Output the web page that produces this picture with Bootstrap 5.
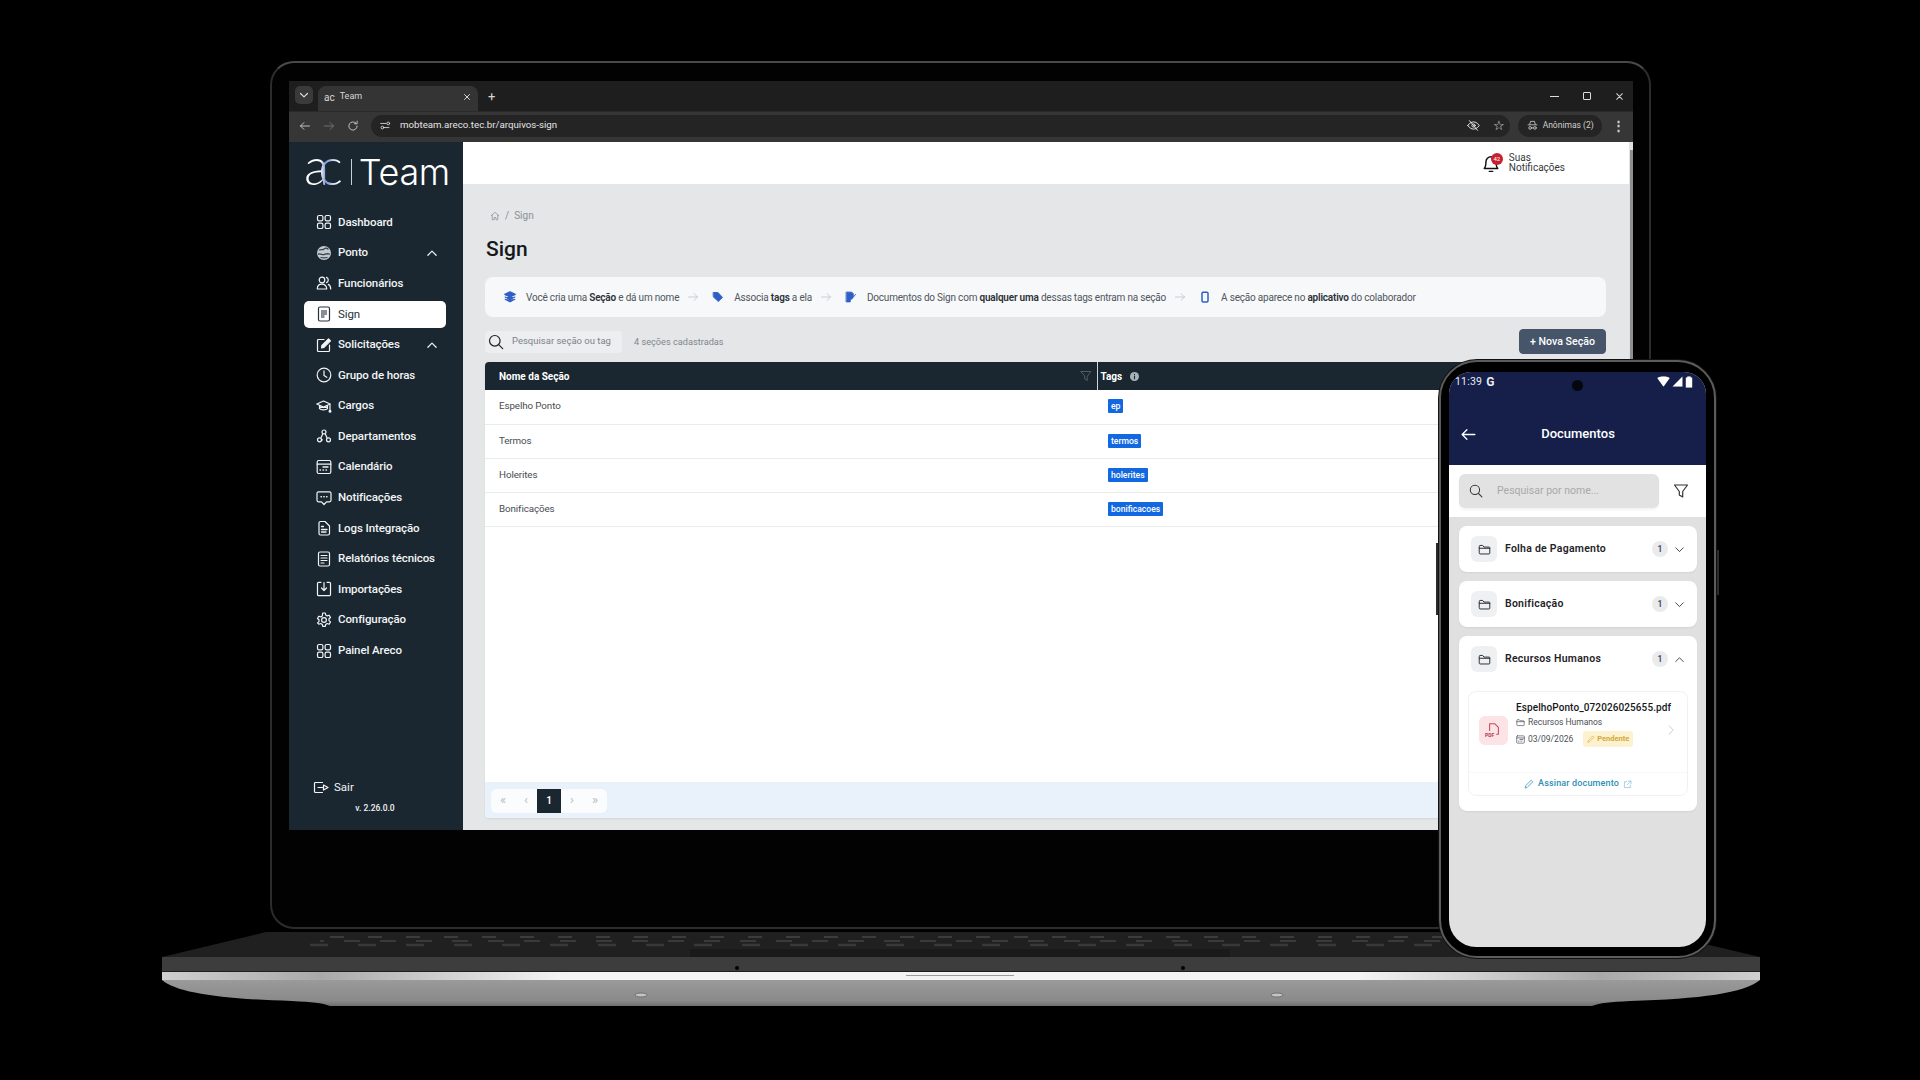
<!DOCTYPE html>
<html lang="pt-BR">
<head>
  <meta charset="UTF-8" />
  <title>Team - Sign</title>
  <link href="https://cdn.jsdelivr.net/npm/bootstrap@5.3.3/dist/css/bootstrap.min.css" rel="stylesheet" />
  <style>
    html, body { background: #000; margin: 0; }
    body { font-family: Roboto, "Liberation Sans", sans-serif; overflow: hidden; }
    .stage { position: relative; width: 1920px; height: 1080px; background: #000; overflow: hidden; }
    .ico { width: 16px; height: 16px; fill: none; stroke: currentColor; stroke-width: 1.2; stroke-linecap: round; stroke-linejoin: round; flex: none; }

    /* laptop */
    .lid { position: absolute; left: 270px; top: 61px; width: 1381px; height: 868px; border: 2px solid #2c2c2c; border-top-color: #4a4a4a; border-radius: 24px; background: #020202; padding: 18px 16px 0 17px; }
    .base { position: absolute; left: 0; top: 0; }
    .browser { width: 1344px; height: 749px; display: flex; flex-direction: column; }
    .tabstrip { height: 30px; background: #1e1e1e; padding: 5px 0 0 6px; color: #d6d6d6; }
    .tab-menu { width: 18px; height: 18px; border-radius: 5px; background: #3a3a3a; margin-right: 5px; }
    .chrome-tab { width: 160px; height: 25px; background: #343434; border-radius: 8px 8px 0 0; padding: 0 7px 3px 6px; font-size: 9px; gap: 5px; }
    .win-ctl { margin-left: auto; gap: 24px; padding: 0 9px 5px 0; }
    .toolbar { height: 31px; background: #363636; color: #cfcfcf; padding: 0 8px 3px 10px; gap: 12px; border-top: 1px solid #2a2a2a; }
    .address { width: 1144px; height: 22px; margin-left: 0; border-radius: 11px; background: #242424; font-size: 9.7px; padding: 0 5px 0 9px; gap: 9px; color: #e4e4e4; }
    .profile { width: 84px; height: 22px; border-radius: 11px; background: #242424; font-size: 8.5px; gap: 5px; margin-left: -4px; }
    .app { flex: 1; display: flex; min-height: 0; background: #e4e6e8; }
    .sidebar { width: 174px; background: #1a2730; color: #f2f4f5; padding: 0 17px 15px 15px; flex: none; }
    .logo { height: 65px; padding: 0 0 6px; color: #fff; line-height: 1; white-space: nowrap; }
    .logo-ac { font-family: Lato, "Open Sans", sans-serif; font-weight: 300; font-size: 52px; line-height: 52px; height: 52px; margin-top: -13px; letter-spacing: -11px; padding-right: 11px; background: linear-gradient(90deg, #fff 42%, #7f98d0 55%, #8ea5da 62%, #fff 88%); -webkit-background-clip: text; background-clip: text; color: transparent; }
    .logo-bar { width: 1px; height: 26px; background: #c9d0d5; margin: 0 7px 0 8px; }
    .logo-team { font-family: Inter, sans-serif; font-weight: 300; font-size: 36px; letter-spacing: -.3px; }
    .side-nav .nav-link { height: 30.6px; color: #f2f4f5; padding: 0 8px 0 12px; font-size: 11.5px; font-weight: 500; gap: 6px; letter-spacing: -.1px; }
    .side-nav .nav-link.active { height: 27px; margin: 2px 0 1.6px; background: #fff; color: #27323a; border-radius: 5px; font-weight: 400; }
    .side-chev { margin-left: auto; width: 12px; height: 12px; stroke-width: 1.6; }
    .side-foot { margin-top: auto; font-size: 11.5px; }
    .side-ver { font-size: 8.5px; font-weight: 500; text-align: center; margin-top: 6px; }

    .main { flex: 1; min-width: 0; display: flex; flex-direction: column; }
    .topbar { height: 42px; background: #fff; padding-right: 64px; font-size: 10px; line-height: 10px; color: #33383c; gap: 9px; }
    .bell-wrap { position: relative; width: 18px; height: 21px; color: #111; }
    .bell-dot { position: absolute; right: -3px; top: 0; width: 12px; height: 12px; line-height: 12px; border-radius: 50%; background: #c8202e; color: #fff; font-size: 6px; text-align: center; }
    .content { flex: 1; display: flex; flex-direction: column; padding: 24px 23px 12px 22px; min-height: 0; }
    .crumbs { font-size: 10px; margin: 0 0 0 5px; --bs-breadcrumb-margin-bottom: 0; --bs-breadcrumb-divider-color: #8a9096; --bs-breadcrumb-item-active-color: #8a9096; --bs-breadcrumb-item-padding-x: 5px; height: 14px; align-items: center; }
    .page-title { font-size: 21px; font-weight: 500; margin: 13px 0 14px 1px; line-height: 28px; color: #14181b; }
    .info-bar { height: 40px; background: #f6f8fa; border-radius: 8px; padding: 0 0 0 19px; font-size: 10px; letter-spacing: -.2px; color: #50565c; }
    .info-bar b { color: #2c3136; font-weight: 600; }
    .info-bar span { margin-left: 10px; }
    .info-ico { color: #2f5fc4; width: 12px; height: 12px; }
    .info-arrow { color: #c3c9ce; width: 12px; height: 12px; margin: 0 13px 0 8px; }
    .tools { height: 25px; margin: 12px 0 8px; gap: 12px; font-size: 9.2px; color: #80868c; }
    .search-box { width: 137px; height: 22px; background: #eceef0; border-radius: 4px; padding-left: 3px; gap: 8px; color: #7d8388; font-size: 9.5px; }
    .btn-new { margin-left: auto; width: 87px; height: 25px; padding: 0; font-size: 10.6px; font-weight: 500; background: #47556a; border-color: #47556a; color: #fff; border-radius: 4px; }
    .grid-card { flex: 1; background: #fff; border-radius: 4px; display: flex; flex-direction: column; overflow: hidden; box-shadow: 0 1px 2px rgba(0,0,0,.08); min-height: 0; }
    .sec-table { margin: 0; font-size: 9.8px; letter-spacing: -.1px; color: #474d52; table-layout: fixed; }
    .sec-table th { background: #1a2730; color: #fff; height: 28px; padding: 0 0 0 14px; font-size: 10px; font-weight: 700; letter-spacing: 0; border: 0; vertical-align: middle; position: relative; }
    .sec-table th + th { border-left: 1px solid #cfd4d8; padding-left: 3px; }
    .sec-table td { height: 34px; padding: 0 0 0 14px; vertical-align: middle; border-color: #e9ecee; color: #474d52; }
    .sec-table td + td { padding-left: 11px; }
    .tag-pill { background: #1268e0; color: #fff; font-size: 8.6px; font-weight: 500; letter-spacing: 0; padding: 3px 3px; border-radius: 1px; line-height: 8px; display: inline-block; }
    .th-filter { position: absolute; right: 5px; top: 8px; width: 12px; height: 12px; color: #56636c; }
    .th-info { width: 9px; height: 9px; margin-left: 5px; vertical-align: -1px; color: #aab2b8; }
    .pager-wrap { margin-top: auto; height: 36px; background: #e9f2fb; padding: 7px 6px; }
    .pager { margin: 0; gap: 0; }
    .pager .page-link { width: 24px; height: 24px; padding: 0; line-height: 22px; text-align: center; background: #fbfcfd; color: #b5bbc0; border: 0; border-radius: 0; font-size: 13px; }
    .pager .active .page-link { background: #1a2730; color: #fff; font-weight: 600; font-size: 10px; line-height: 24px; }
    .scroll-rail { width: 4px; background: #dfe1e3; flex: none; position: relative; }
    .scroll-rail::after { content: ""; position: absolute; inset: 8px 0 0 1px; background: #8d8f91; }

    /* phone */
    .phone { position: absolute; left: 1439px; top: 360px; width: 277px; height: 598px; background: #000; border: 2px solid #5c5c5c; border-radius: 38px; padding: 10px 8px 9px; box-shadow: 0 0 0 1px #111; }
    .phone-key { position: absolute; width: 3px; background: #2b2b2b; }
    .screen { position: relative; height: 100%; background: #e0e0e0; border-radius: 22px 22px 27px 27px; overflow: hidden; }
    .phone-head { height: 93px; background: #151f4a; color: #fff; padding: 0 14px 0 6px; }
    .status { height: 18px; padding-top: 1px; font-size: 10.5px; color: #e9ebf2; letter-spacing: .2px; }
    .status svg { transform: scale(1.15); }
    .camera { position: absolute; left: 123px; top: 8px; width: 11px; height: 11px; border-radius: 50%; background: #05070f; }
    .doc-title { height: 73px; padding: 15px 0 0 9px; position: relative; font-size: 13px; font-weight: 500; justify-content: center; }
    .doc-back { position: absolute; left: 5px; top: 36px; width: 17px; height: 17px; }
    .search-strip { height: 52px; background: #fff; padding: 0 17px 0 10px; }
    .m-search { width: 200px; height: 34px; background: #e2e2e2; border-radius: 6px; padding-left: 10px; gap: 14px; font-size: 10.5px; color: #a9a9a9; box-shadow: 0 2px 3px rgba(0,0,0,.05); }
    .m-list { padding: 9px 9px 0 10px; gap: 9px; }
    .m-card { background: #fff; border: 0; border-radius: 8px; box-shadow: 0 1px 2px rgba(0,0,0,.06); color: #1f2328; }
    .m-row { height: 46px; padding: 0 12px; font-size: 10.5px; font-weight: 600; letter-spacing: .25px; }
    .folder-box { width: 26px; height: 26px; background: #eff0f2; border-radius: 6px; margin-right: 8px; flex: none; color: #2a2e33; }
    .count { width: 16px; height: 16px; line-height: 16px; text-align: center; border-radius: 50%; background: #e9ebef; color: #44484e; font-size: 8.5px; margin-left: auto; margin-right: 6px; }
    .doc-card { margin: 9px 9px 0; height: 105px; border: 1px solid #f0f1f2; border-radius: 8px; position: relative; }
    .doc-top { padding: 9px 0 0 10px; height: 80px; }
    .pdf-box { width: 29px; height: 29px; background: #fbe3e6; border-radius: 6px; color: #c34a5c; margin: 15px 8px 0 0; position: relative; flex: none; }
    .pdf-label { position: absolute; left: 6px; top: 16px; font-size: 5px; font-weight: 700; color: #b1384c; }
    .doc-name { font-size: 10px; font-weight: 500; color: #15181b; letter-spacing: .1px; line-height: 13px; }
    .doc-meta { font-size: 8.5px; color: #4a4f55; gap: 3px; margin-top: 2px; line-height: 12px; font-weight: 400; }
    .doc-meta + .doc-meta { margin-top: 3px; }
    .pend { background: #fdf2cf; color: #d6a63c; font-size: 7.5px; font-weight: 700; padding: 2px 4px; margin-left: 7px; border-radius: 3px; gap: 2px; }
    .doc-next { position: absolute; right: 10px; top: 32px; width: 12px; height: 12px; color: #c5c8cc; }
    .doc-sign { height: 23px; border-top: 1px solid #f7f7f8; font-size: 9px; font-weight: 500; color: #2f8fb3; gap: 4px; letter-spacing: .15px; }
  </style>
</head>
<body>
<svg width="0" height="0" class="position-absolute">
  <defs>
    <symbol id="i-grid" viewBox="0 0 16 16"><rect x="1.5" y="1.5" width="5.4" height="5.4" rx="1.6"/><rect x="9.1" y="1.5" width="5.4" height="5.4" rx="1.6"/><rect x="1.5" y="9.1" width="5.4" height="5.4" rx="1.6"/><rect x="9.1" y="9.1" width="5.4" height="5.4" rx="1.6"/></symbol>
    <symbol id="i-globe" viewBox="0 0 16 16"><circle cx="8" cy="8" r="7" fill="#c4cacc" stroke="none"/><path d="M3.5 5c2-1 3 .2 4.200-.8S10.500 2.500 12 4M2.500 9c2.500-.6 3.500 1.200 5.500.6s3-1.400 5.500-.6M5 12.500c2 .6 4 .6 6 0" stroke="#33424c" stroke-width="1.300"/></symbol>
    <symbol id="i-people" viewBox="0 0 16 16"><circle cx="6" cy="5" r="2.800"/><path d="M1.300 14c0-3 2-4.800 4.700-4.800s4.700 1.800 4.700 4.800zM10.500 2.400a2.800 2.800 0 0 1 0 5.200M12.300 9.400c1.500.7 2.400 2.300 2.400 4.600"/></symbol>
    <symbol id="i-doc" viewBox="0 0 16 16"><rect x="2.500" y="1" width="11" height="14" rx="1.500"/><path d="M5 4h6v5H8.500v3H5z" fill="currentColor" stroke="none" opacity=".55"/></symbol>
    <symbol id="i-edit" viewBox="0 0 16 16"><path d="M13.500 8v5.500a1 1 0 0 1-1 1h-10a1 1 0 0 1-1-1v-10a1 1 0 0 1 1-1H8"/><path d="M5.500 10.800l.5-2.500L12.500 1.800l2 2L8 10.300z" fill="currentColor"/></symbol>
    <symbol id="i-clock" viewBox="0 0 16 16"><circle cx="8" cy="8" r="6.800"/><path d="M8 3.800V8.500l2.800 1.800"/></symbol>
    <symbol id="i-cap" viewBox="0 0 16 16"><path d="M.8 6L7.500 3l6.700 3-6.700 3zM3.500 7.500v3.200c1.200 1.600 6.800 1.600 8 0V7.500M3.800 9.300h7.400M14 6.500v5.500"/><circle cx="14" cy="13.200" r=".9" fill="currentColor"/></symbol>
    <symbol id="i-dept" viewBox="0 0 16 16"><circle cx="8" cy="4" r="2"/><circle cx="3.500" cy="11.800" r="2"/><circle cx="12.500" cy="11.800" r="2"/><path d="M6.800 5.800L5 9.800M9.200 5.800L11 9.800M5.500 11.800h1"/></symbol>
    <symbol id="i-cal" viewBox="0 0 16 16"><rect x="1.200" y="1.500" width="13.600" height="13" rx="1.500"/><path d="M1.200 5.200h13.600M7 8h5M4 11h.5M7 11h.5M10 11h.5" stroke-width="1.300"/></symbol>
    <symbol id="i-chat" viewBox="0 0 16 16"><path d="M2.500 1.800h11a1.500 1.500 0 0 1 1.500 1.500v7a1.500 1.500 0 0 1-1.500 1.500h-3L8 14.500 5.500 11.800h-3A1.500 1.500 0 0 1 1 10.300v-7a1.500 1.500 0 0 1 1.500-1.500z"/><path d="M5 6.800h.4M7.800 6.800h.4M10.600 6.800h.4" stroke-width="1.400"/></symbol>
    <symbol id="i-log" viewBox="0 0 16 16"><path d="M3 3a1.500 1.500 0 0 1 1.500-1.500H9L13.500 6v7.500A1.500 1.500 0 0 1 12 15H4.500A1.500 1.500 0 0 1 3 13.500z"/><path d="M5.500 9.500H11M5.500 12H10M5.500 6.500h2" stroke-width="1.300"/></symbol>
    <symbol id="i-report" viewBox="0 0 16 16"><rect x="2.500" y="1" width="11" height="14" rx="1.500"/><path d="M5 4.500h6M5 7h6M5 9.500h6M5 12h3"/></symbol>
    <symbol id="i-import" viewBox="0 0 16 16"><path d="M5 1.300H2.800a1.300 1.300 0 0 0-1.300 1.300v10.800a1.300 1.300 0 0 0 1.300 1.300h10.400a1.300 1.300 0 0 0 1.300-1.300V2.600a1.300 1.300 0 0 0-1.300-1.300H11"/><path d="M8 1.500v7.500M5.500 7L8 9.500 10.500 7"/></symbol>
    <symbol id="i-gear" viewBox="0 0 16 16"><circle cx="8" cy="8" r="2.400"/><path d="M6.700 1h2.600l.4 2 1.500.9 2-.7 1.300 2.300-1.500 1.300v1.800l1.500 1.300-1.300 2.300-2-.7-1.500.9-.4 2H6.700l-.4-2-1.500-.9-2 .7L1.500 10.900 3 9.600V7.800L1.500 6.500l1.300-2.300 2 .7 1.500-.9z"/></symbol>
    <symbol id="i-exit" viewBox="0 0 16 16"><path d="M9.500 2.500h-7a1 1 0 0 0-1 1v8a1 1 0 0 0 1 1h7M5 7.500h5.500V5l4.500 2.500-4.500 2.500V7.500"/></symbol>
    <symbol id="i-up" viewBox="0 0 16 16"><path d="M2.500 11l5.500-5.500 5.500 5.500"/></symbol>
    <symbol id="i-down" viewBox="0 0 16 16"><path d="M2.500 5.500L8 11l5.500-5.500"/></symbol>
    <symbol id="i-right" viewBox="0 0 16 16"><path d="M5.500 2.500L11 8l-5.500 5.500"/></symbol>
    <symbol id="i-arrow" viewBox="0 0 16 16"><path d="M2 8h12M9.500 3.500L14 8l-4.500 4.500"/></symbol>
    <symbol id="i-left" viewBox="0 0 16 16"><path d="M14 8H2M6.500 3.500L2 8l4.500 4.500"/></symbol>
    <symbol id="i-search" viewBox="0 0 16 16"><circle cx="6.800" cy="6.800" r="5.300"/><path d="M10.700 10.700l4 4"/></symbol>
    <symbol id="i-home" viewBox="0 0 16 16"><path d="M2 7.500L8 2l6 5.500M3.500 6.500V14h3v-3.500h3V14h3V6.500"/></symbol>
    <symbol id="i-funnel" viewBox="0 0 16 16"><path d="M1.500 2h13L9.700 8.500V14l-3.400-2V8.500z"/></symbol>
    <symbol id="i-folder" viewBox="0 0 16 16"><path d="M1.500 4a1 1 0 0 1 1-1h3.300l1.500 2h6.200a1 1 0 0 1 1 1v6.500a1 1 0 0 1-1 1h-11a1 1 0 0 1-1-1zM1.500 6.500h13"/></symbol>
    <symbol id="i-pencil" viewBox="0 0 16 16"><path d="M2 14l.8-3.500L11.500 2l2.500 2.500-8.600 8.700z"/></symbol>
    <symbol id="i-ext" viewBox="0 0 16 16"><path d="M7 3H2.500v10.500H13V9M9.500 1.800h4.700v4.700M14 2L7.500 8.500"/></symbol>
    <symbol id="i-x" viewBox="0 0 16 16"><path d="M3 3l10 10M13 3L3 13"/></symbol>
  </defs>
</svg>

<div class="stage">
  <!-- base do notebook -->
  <svg class="base" width="1920" height="1080" viewBox="0 0 1920 1080">
    <defs>
      <linearGradient id="silver" x1="0" y1="0" x2="0" y2="1"><stop offset="0" stop-color="#9a9a9a"/><stop offset=".8" stop-color="#8a8a8a"/><stop offset="1" stop-color="#6f6f6f"/></linearGradient>
      <linearGradient id="shine" x1="0" y1="0" x2="1" y2="0"><stop offset="0" stop-color="#cfcfcf"/><stop offset=".1" stop-color="#a9a9a9"/><stop offset=".25" stop-color="#f4f4f4"/><stop offset=".75" stop-color="#f4f4f4"/><stop offset=".9" stop-color="#a9a9a9"/><stop offset="1" stop-color="#cfcfcf"/></linearGradient>
    </defs>
    <polygon points="266,932 1654,932 1760,957 162,957" fill="#202020"/>
    <path d="M330 937H1600" stroke="#3c3c3c" stroke-width="2" stroke-dasharray="14 24"/>
    <path d="M320 941H1610" stroke="#3a3a3a" stroke-width="2" stroke-dasharray="16 20" stroke-dashoffset="12"/>
    <path d="M310 945H1620" stroke="#383838" stroke-width="2.500" stroke-dasharray="18 30"/>
    <rect x="690" y="949" width="540" height="8" fill="#1a1a1a"/>
    <rect x="162" y="957" width="1598" height="14.500" fill="#3d3d3d"/>
    <circle cx="737" cy="968" r="2" fill="#000"/><circle cx="1183" cy="968" r="2" fill="#000"/>
    <rect x="162" y="972" width="1598" height="8" fill="url(#shine)"/>
    <path d="M162 980H1760C1745 993 1700 999 1630 1001C1610 1002 1600 1003 1592 1006H330C322 1003 312 1002 292 1001C222 999 177 993 162 980Z" fill="url(#silver)"/>
    <rect x="906" y="975" width="108" height="1" fill="#9d9d9d"/>
    <ellipse cx="641" cy="995" rx="6" ry="2" fill="#c4c4c4" stroke="#6f6f6f"/><ellipse cx="1277" cy="995" rx="6" ry="2" fill="#c4c4c4" stroke="#6f6f6f"/>
  </svg>

  <div class="lid">
    <div class="browser">
      <div class="tabstrip d-flex align-items-start">
        <div class="tab-menu d-flex align-items-center justify-content-center"><svg class="ico" style="width:10px;height:10px;stroke-width:2"><use href="#i-down"/></svg></div>
        <div class="chrome-tab d-flex align-items-center">
          <span style="font-size:10px">ac</span><span>Team</span>
          <svg class="ico ms-auto" style="width:8px;height:8px;stroke-width:2"><use href="#i-x"/></svg>
        </div>
        <span class="lh-1" style="font-size:13px;margin:4px 0 0 10px">+</span>
        <div class="win-ctl d-flex align-items-center align-self-stretch">
          <span style="width:9px;height:1px;background:#ddd"></span>
          <span style="width:8px;height:8px;border:1px solid #ddd;border-radius:1px"></span>
          <svg class="ico" style="width:9px;height:9px;stroke-width:1.8"><use href="#i-x"/></svg>
        </div>
      </div>
      <div class="toolbar d-flex align-items-center">
        <svg class="ico" style="width:12px;height:12px"><use href="#i-left"/></svg>
        <svg class="ico" style="width:12px;height:12px;color:#777"><use href="#i-arrow"/></svg>
        <svg class="ico" style="width:12px;height:12px" viewBox="0 0 16 16"><path d="M13.500 8a5.500 5.500 0 1 1-1.600-3.900M13.500 1.500v3.500H10"/></svg>
        <div class="address d-flex align-items-center">
          <svg class="ico" style="width:11px;height:11px" viewBox="0 0 16 16"><path d="M1 5h8M13 11H6"/><circle cx="12" cy="5" r="2"/><circle cx="3.500" cy="11" r="2"/></svg>
          <span>mobteam.areco.tec.br/arquivos-sign</span>
          <svg class="ico ms-auto" style="width:13px;height:13px" viewBox="0 0 16 16"><path d="M1 8s2.500-4.500 7-4.500S15 8 15 8s-2.500 4.500-7 4.500S1 8 1 8zM3 2l10 12"/><circle cx="8" cy="8" r="2"/></svg>
          <span class="ms-1 lh-1" style="font-size:13px">☆</span>
        </div>
        <div class="profile d-flex align-items-center justify-content-center">
          <svg class="ico" style="width:11px;height:11px" viewBox="0 0 16 16"><path d="M4 6l1.200-4h5.600L12 6M1.500 7h13" /><circle cx="4.500" cy="11.500" r="2"/><circle cx="11.500" cy="11.500" r="2"/><path d="M6.500 11.500h3"/></svg>
          <span>Anônimas (2)</span>
        </div>
        <span class="lh-1" style="font-size:13px;font-weight:700;margin-left:-2px">⋮</span>
      </div>

      <div class="app">
        <aside class="sidebar d-flex flex-column">
          <div class="logo d-flex align-items-center align-self-start">
            <span class="logo-ac">ac</span>
            <span class="logo-bar"></span>
            <span class="logo-team">Team</span>
          </div>
          <nav class="nav flex-column side-nav">
            <a class="nav-link d-flex align-items-center"><svg class="ico"><use href="#i-grid"/></svg>Dashboard</a>
            <a class="nav-link d-flex align-items-center"><svg class="ico"><use href="#i-globe"/></svg>Ponto<svg class="ico side-chev"><use href="#i-up"/></svg></a>
            <a class="nav-link d-flex align-items-center"><svg class="ico"><use href="#i-people"/></svg>Funcionários</a>
            <a class="nav-link active d-flex align-items-center"><svg class="ico"><use href="#i-doc"/></svg>Sign</a>
            <a class="nav-link d-flex align-items-center"><svg class="ico"><use href="#i-edit"/></svg>Solicitações<svg class="ico side-chev"><use href="#i-up"/></svg></a>
            <a class="nav-link d-flex align-items-center"><svg class="ico"><use href="#i-clock"/></svg>Grupo de horas</a>
            <a class="nav-link d-flex align-items-center"><svg class="ico"><use href="#i-cap"/></svg>Cargos</a>
            <a class="nav-link d-flex align-items-center"><svg class="ico"><use href="#i-dept"/></svg>Departamentos</a>
            <a class="nav-link d-flex align-items-center"><svg class="ico"><use href="#i-cal"/></svg>Calendário</a>
            <a class="nav-link d-flex align-items-center"><svg class="ico"><use href="#i-chat"/></svg>Notificações</a>
            <a class="nav-link d-flex align-items-center"><svg class="ico"><use href="#i-log"/></svg>Logs Integração</a>
            <a class="nav-link d-flex align-items-center"><svg class="ico"><use href="#i-report"/></svg>Relatórios técnicos</a>
            <a class="nav-link d-flex align-items-center"><svg class="ico"><use href="#i-import"/></svg>Importações</a>
            <a class="nav-link d-flex align-items-center"><svg class="ico"><use href="#i-gear"/></svg>Configuração</a>
            <a class="nav-link d-flex align-items-center"><svg class="ico"><use href="#i-grid"/></svg>Painel Areco</a>
          </nav>
          <div class="side-foot">
            <div class="d-flex align-items-center" style="padding-left:9px;gap:5px"><svg class="ico"><use href="#i-exit"/></svg><span>Sair</span></div>
            <div class="side-ver">v. 2.26.0.0</div>
          </div>
        </aside>

        <div class="main">
          <div class="topbar d-flex align-items-center justify-content-end">
            <div class="bell-wrap">
              <svg class="ico" style="width:18px;height:21px;stroke-width:1.300" viewBox="0 0 16 18"><path d="M2 13.500c1.500-1.500 1.500-3.500 1.500-6A4.500 4.500 0 0 1 12.500 7.500c0 2.500 0 4.500 1.500 6zM6.500 16h3" /></svg>
              <span class="bell-dot">42</span>
            </div>
            <div>Suas<br />Notificações</div>
          </div>
          <div class="content">
            <nav aria-label="breadcrumb">
              <ol class="breadcrumb crumbs">
                <li class="breadcrumb-item d-flex align-items-center"><svg class="ico" style="width:10px;height:10px;color:#8a9096"><use href="#i-home"/></svg></li>
                <li class="breadcrumb-item active">Sign</li>
              </ol>
            </nav>
            <h1 class="page-title">Sign</h1>
            <div class="info-bar d-flex align-items-center">
              <svg class="ico info-ico" viewBox="0 0 16 16"><path d="M8 1L15 4.500 8 8 1 4.500zM1.500 8L8 11.200 14.500 8M1.500 11L8 14.500 14.500 11" fill="currentColor" stroke-width="1.500"/></svg>
              <span>Você cria uma <b>Seção</b> e dá um nome</span>
              <svg class="ico info-arrow"><use href="#i-arrow"/></svg>
              <svg class="ico info-ico" viewBox="0 0 16 16"><path d="M2 2h6l6 6.500-5.500 5.500L2 8z" fill="currentColor"/></svg>
              <span>Associa <b>tags</b> a ela</span>
              <svg class="ico info-arrow"><use href="#i-arrow"/></svg>
              <svg class="ico info-ico" viewBox="0 0 16 16"><path d="M2 1.500h7l2 2v4l-4 4.500v2.500H2z" fill="currentColor"/><path d="M9 11l5-6.500"/></svg>
              <span>Documentos do Sign com <b>qualquer uma</b> dessas tags entram na seção</span>
              <svg class="ico info-arrow"><use href="#i-arrow"/></svg>
              <svg class="ico info-ico" viewBox="0 0 16 16"><rect x="4" y="1.500" width="8" height="13" rx="1.500" stroke-width="2"/></svg>
              <span>A seção aparece no <b>aplicativo</b> do colaborador</span>
            </div>
            <div class="tools d-flex align-items-center">
              <div class="search-box d-flex align-items-center"><svg class="ico" style="color:#222"><use href="#i-search"/></svg><span>Pesquisar seção ou tag</span></div>
              <span>4 seções cadastradas</span>
              <button type="button" class="btn btn-new">+ Nova Seção</button>
            </div>
            <div class="grid-card">
              <table class="table sec-table">
                <colgroup><col style="width:612px" /><col /></colgroup>
                <thead><tr><th>Nome da Seção<svg class="ico th-filter"><use href="#i-funnel"/></svg></th><th>Tags <svg class="ico th-info" viewBox="0 0 16 16"><circle cx="8" cy="8" r="8" fill="currentColor" stroke="none"/><path d="M8 7v5M8 4v.5" stroke="#1a2730" stroke-width="2"/></svg></th></tr></thead>
                <tbody>
                  <tr><td>Espelho Ponto</td><td><span class="tag-pill">ep</span></td></tr>
                  <tr><td>Termos</td><td><span class="tag-pill">termos</span></td></tr>
                  <tr><td>Holerites</td><td><span class="tag-pill">holerites</span></td></tr>
                  <tr><td>Bonificações</td><td><span class="tag-pill">bonificacoes</span></td></tr>
                </tbody>
              </table>
              <div class="pager-wrap">
                <ul class="pagination pager">
                  <li class="page-item"><a class="page-link">«</a></li>
                  <li class="page-item"><a class="page-link">‹</a></li>
                  <li class="page-item active"><a class="page-link">1</a></li>
                  <li class="page-item"><a class="page-link">›</a></li>
                  <li class="page-item"><a class="page-link">»</a></li>
                </ul>
              </div>
            </div>
          </div>
        </div>
        <div class="scroll-rail"></div>
      </div>
    </div>
  </div>

  <!-- celular -->
  <span class="phone-key" style="left:1436px;top:543px;height:72px"></span>
  <span class="phone-key" style="left:1716px;top:550px;height:45px"></span>
  <div class="phone">
    <div class="screen d-flex flex-column">
      <div class="phone-head">
        <div class="status d-flex align-items-center">
          <span>11:39</span><b class="ms-1" style="font-size:12px">G</b>
          <span class="ms-auto d-flex align-items-center gap-1">
            <svg width="11" height="9" viewBox="0 0 11 9"><path d="M0 1.500C3 -.5 8 -.5 11 1.500L5.500 9z" fill="#fff"/></svg>
            <svg width="9" height="9" viewBox="0 0 9 9"><path d="M9 0v9H0z" fill="#fff"/></svg>
            <svg width="6" height="10" viewBox="0 0 6 10"><path d="M1.500 0h3v1H6v9H0V1h1.500z" fill="#fff"/></svg>
          </span>
        </div>
        <span class="camera"></span>
        <div class="doc-title d-flex align-items-center">
          <svg class="ico doc-back"><use href="#i-left"/></svg>
          <span>Documentos</span>
        </div>
      </div>
      <div class="search-strip d-flex align-items-center justify-content-between">
        <div class="m-search d-flex align-items-center"><svg class="ico" style="width:14px;height:14px;color:#333"><use href="#i-search"/></svg><span>Pesquisar por nome...</span></div>
        <svg class="ico" style="color:#333"><use href="#i-funnel"/></svg>
      </div>
      <div class="m-list d-flex flex-column">
        <div class="card m-card">
          <div class="m-row d-flex align-items-center">
            <span class="folder-box d-flex align-items-center justify-content-center"><svg class="ico" style="width:13px;height:13px"><use href="#i-folder"/></svg></span>
            <span>Folha de Pagamento</span><span class="count">1</span>
            <svg class="ico" style="width:11px;height:11px"><use href="#i-down"/></svg>
          </div>
        </div>
        <div class="card m-card">
          <div class="m-row d-flex align-items-center">
            <span class="folder-box d-flex align-items-center justify-content-center"><svg class="ico" style="width:13px;height:13px"><use href="#i-folder"/></svg></span>
            <span>Bonificação</span><span class="count">1</span>
            <svg class="ico" style="width:11px;height:11px"><use href="#i-down"/></svg>
          </div>
        </div>
        <div class="card m-card" style="height:175px">
          <div class="m-row d-flex align-items-center">
            <span class="folder-box d-flex align-items-center justify-content-center"><svg class="ico" style="width:13px;height:13px"><use href="#i-folder"/></svg></span>
            <span>Recursos Humanos</span><span class="count">1</span>
            <svg class="ico" style="width:11px;height:11px"><use href="#i-up"/></svg>
          </div>
          <div class="doc-card">
            <div class="doc-top d-flex">
              <div class="pdf-box d-flex justify-content-center">
                <svg class="ico" style="width:14px;height:17px;margin-top:5px" viewBox="0 0 16 18"><path d="M3 10V2.500h6L13 6.500v8H11"/></svg>
                <span class="pdf-label">PDF</span>
              </div>
              <div>
                <div class="doc-name">EspelhoPonto_072026025655.pdf</div>
                <div class="doc-meta d-flex align-items-center"><svg class="ico" style="width:9px;height:9px"><use href="#i-folder"/></svg>Recursos Humanos</div>
                <div class="doc-meta d-flex align-items-center"><svg class="ico" style="width:9px;height:9px"><use href="#i-cal"/></svg>03/09/2026<span class="pend d-inline-flex align-items-center"><svg class="ico" style="width:8px;height:8px"><use href="#i-pencil"/></svg>Pendente</span></div>
              </div>
            </div>
            <svg class="ico doc-next"><use href="#i-right"/></svg>
            <div class="doc-sign d-flex align-items-center justify-content-center">
              <svg class="ico" style="width:10px;height:10px"><use href="#i-pencil"/></svg>
              <span>Assinar documento</span>
              <svg class="ico" style="width:9px;height:9px;opacity:.6"><use href="#i-ext"/></svg>
            </div>
          </div>
        </div>
      </div>
    </div>
  </div>
</div>
<script src="https://cdn.jsdelivr.net/npm/bootstrap@5.3.3/dist/js/bootstrap.bundle.min.js"></script>
</body>
</html>
